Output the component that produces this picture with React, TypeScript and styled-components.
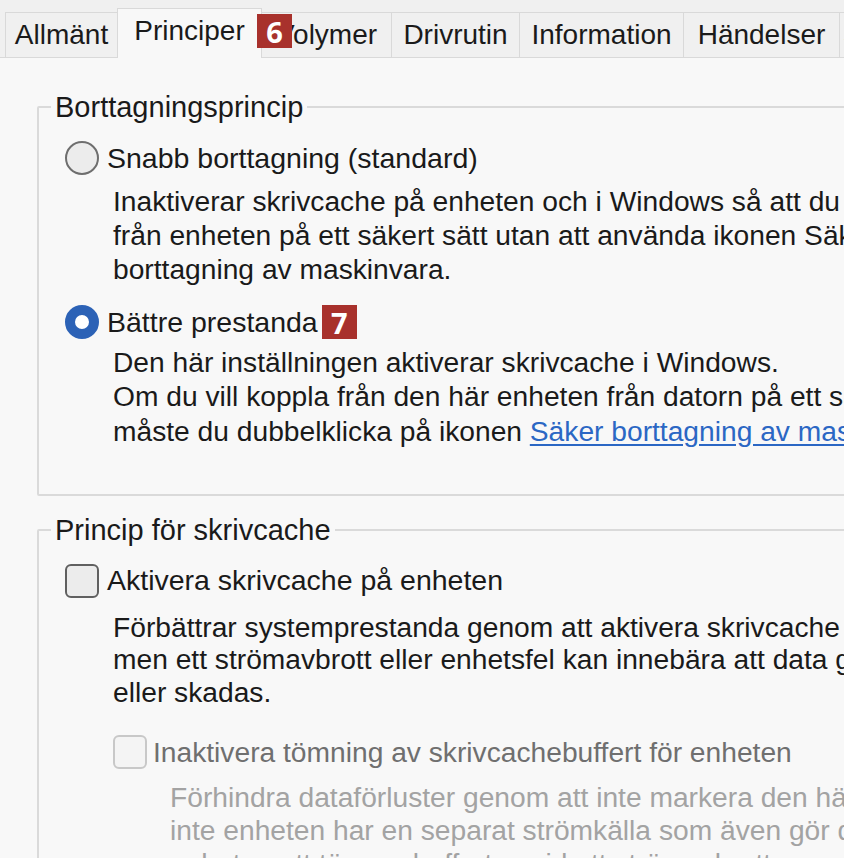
import React from "react";
import styled, { createGlobalStyle, css } from "styled-components";

const GlobalStyle = createGlobalStyle`
  html, body {
    margin: 0;
    padding: 0;
    background: #f0f0f0;
  }
  body {
    font-family: "Liberation Sans", Arial, sans-serif;
    overflow: hidden;
  }
`;

const Window = styled.div`
  width: 844px;
  height: 858px;
  overflow: hidden;
  display: flex;
  flex-direction: column;
  background: #f0f0f0;
  color: #1a1a1a;
  font-size: 28.5px;
`;

const TabStrip = styled.div`
  display: flex;
  align-items: flex-end;
  height: 57px;
  box-sizing: border-box;
  padding: 8px 0 0 6px;
  position: relative;
  z-index: 1;
  font-size: 28px;
`;

const Tab = styled.div<{ $active?: boolean; $w: number }>`
  position: relative;
  flex-shrink: 0;
  display: flex;
  align-items: center;
  justify-content: center;
  box-sizing: border-box;
  width: ${(p) => p.$w}px;
  white-space: nowrap;
  line-height: 1;
  margin-left: -1px;
  border: 1px solid #d9d9d9;
  border-bottom: none;
  height: 45px;
  background: #f0f0f0;
  ${(p) =>
    p.$active &&
    css`
      height: 50px;
      margin-bottom: -1px;
      padding-bottom: 5px;
      background: #f8f8f8;
      z-index: 2;
    `}
`;

const Badge = styled.span`
  display: inline-flex;
  align-items: center;
  justify-content: center;
  width: 35px;
  height: 34px;
  background: #a8312c;
  color: #ffffff;
  font-family: "Open Sans", "Liberation Sans", sans-serif;
  font-weight: 700;
  font-size: 29px;
  line-height: 1;
  flex-shrink: 0;
`;

const TabBadge = styled(Badge)`
  position: absolute;
  left: 139px;
  top: 5px;
  z-index: 3;
`;

const InlineBadge = styled(Badge)`
  margin-left: -4px;
`;

const Panel = styled.div`
  flex: 1;
  background: #f8f8f8;
  border-top: 1px solid #d9d9d9;
  padding: 34px 0 0 37px;
  overflow: hidden;
`;

const GroupBox = styled.fieldset<{ $mt?: number }>`
  margin: ${(p) => p.$mt ?? 0}px 0 0 0;
  padding: 0;
  width: 900px;
  min-inline-size: 0;
  box-sizing: border-box;
  border: 2px solid #dadada;
  border-radius: 2px;
`;

const Legend = styled.legend`
  margin-left: 12px;
  padding: 0 4px;
  font-size: 29px;
  line-height: 30px;
  color: #1a1a1a;
`;

const GroupBody = styled.div<{ $pb: number }>`
  display: flex;
  flex-direction: column;
  padding: 19px 0 ${(p) => p.$pb}px 26px;
`;

const OptionRow = styled.label<{ $mt?: number; $ml?: number; $gap?: number; $disabled?: boolean }>`
  display: flex;
  align-items: center;
  gap: ${(p) => p.$gap ?? 8}px;
  height: 34px;
  margin: ${(p) => p.$mt ?? 0}px 0 0 ${(p) => p.$ml ?? 0}px;
  white-space: nowrap;
  color: ${(p) => (p.$disabled ? "#6f6f6f" : "#1a1a1a")};
  font-size: ${(p) => (p.$disabled ? "28.2px" : "inherit")};
`;

const Radio = styled.span<{ $checked?: boolean }>`
  width: 34px;
  height: 34px;
  box-sizing: border-box;
  border-radius: 50%;
  flex-shrink: 0;
  border: 2px solid #6e6e6e;
  background: #ececec;
  ${(p) =>
    p.$checked &&
    css`
      border: 10px solid #2c62b6;
      background: #ffffff;
    `}
`;

const Checkbox = styled.span<{ $disabled?: boolean }>`
  width: 34px;
  height: 34px;
  box-sizing: border-box;
  border-radius: 6px;
  flex-shrink: 0;
  border: 2px solid ${(p) => (p.$disabled ? "#c8c8c8" : "#606060")};
  background: ${(p) => (p.$disabled ? "#f4f4f4" : "#ececec")};
`;

const Desc = styled.p<{ $mt: number; $ml: number; $lh: number; $muted?: boolean }>`
  margin: ${(p) => p.$mt}px 0 0 ${(p) => p.$ml}px;
  font-size: 28.2px;
  line-height: ${(p) => p.$lh}px;
  white-space: nowrap;
  color: ${(p) => (p.$muted ? "#a3a3a3" : "#1a1a1a")};
`;

const Link = styled.a`
  color: #2b67c4;
  text-decoration: underline;
  text-underline-offset: 3px;
`;

const tabs: { label: string; w: number }[] = [
  { label: "Allmänt", w: 113 },
  { label: "Principer", w: 145 },
  { label: "Volymer", w: 131 },
  { label: "Drivrutin", w: 129 },
  { label: "Information", w: 165 },
  { label: "Händelser", w: 157 },
  { label: "Säkerhet", w: 120 },
];

export default function App() {
  return (
    <>
      <GlobalStyle />
      <Window>
        <TabStrip>
          {tabs.map((t) => (
            <Tab key={t.label} $w={t.w} $active={t.label === "Principer"}>
              {t.label}
              {t.label === "Principer" && <TabBadge>6</TabBadge>}
            </Tab>
          ))}
        </TabStrip>
        <Panel>
          <GroupBox>
            <Legend>Borttagningsprincip</Legend>
            <GroupBody $pb={46}>
              <OptionRow>
                <Radio />
                Snabb borttagning (standard)
              </OptionRow>
              <Desc $mt={9} $ml={48} $lh={34}>
                Inaktiverar skrivcache på enheten och i Windows så att du kan koppla
                <br />
                från enheten på ett säkert sätt utan att använda ikonen Säker
                <br />
                borttagning av maskinvara.
              </Desc>
              <OptionRow $mt={19}>
                <Radio $checked />
                Bättre prestanda
                <InlineBadge>7</InlineBadge>
              </OptionRow>
              <Desc $mt={6} $ml={48} $lh={34.3}>
                Den här inställningen aktiverar skrivcache i Windows.
                <br />
                Om du vill koppla från den här enheten från datorn på ett säkert sätt
                <br />
                måste du dubbelklicka på ikonen <Link>Säker borttagning av maskinvara</Link> i
                meddelandefältet.
              </Desc>
            </GroupBody>
          </GroupBox>

          <GroupBox $mt={19}>
            <Legend>Princip för skrivcache</Legend>
            <GroupBody $pb={40}>
              <OptionRow>
                <Checkbox />
                Aktivera skrivcache på enheten
              </OptionRow>
              <Desc $mt={13} $ml={48} $lh={32.5}>
                Förbättrar systemprestanda genom att aktivera skrivcache på enheten,
                <br />
                men ett strömavbrott eller enhetsfel kan innebära att data går förlorade
                <br />
                eller skadas.
              </Desc>
              <OptionRow $mt={27} $ml={48} $gap={6} $disabled>
                <Checkbox $disabled />
                Inaktivera tömning av skrivcachebuffert för enheten
              </OptionRow>
              <Desc $mt={11.5} $ml={105} $lh={33} $muted>
                Förhindra dataförluster genom att inte markera den här kryssrutan om
                <br />
                inte enheten har en separat strömkälla som även gör det möjligt för
                <br />
                enheten att tömma bufferten vid ett strömavbrott.
              </Desc>
            </GroupBody>
          </GroupBox>
        </Panel>
      </Window>
    </>
  );
}
